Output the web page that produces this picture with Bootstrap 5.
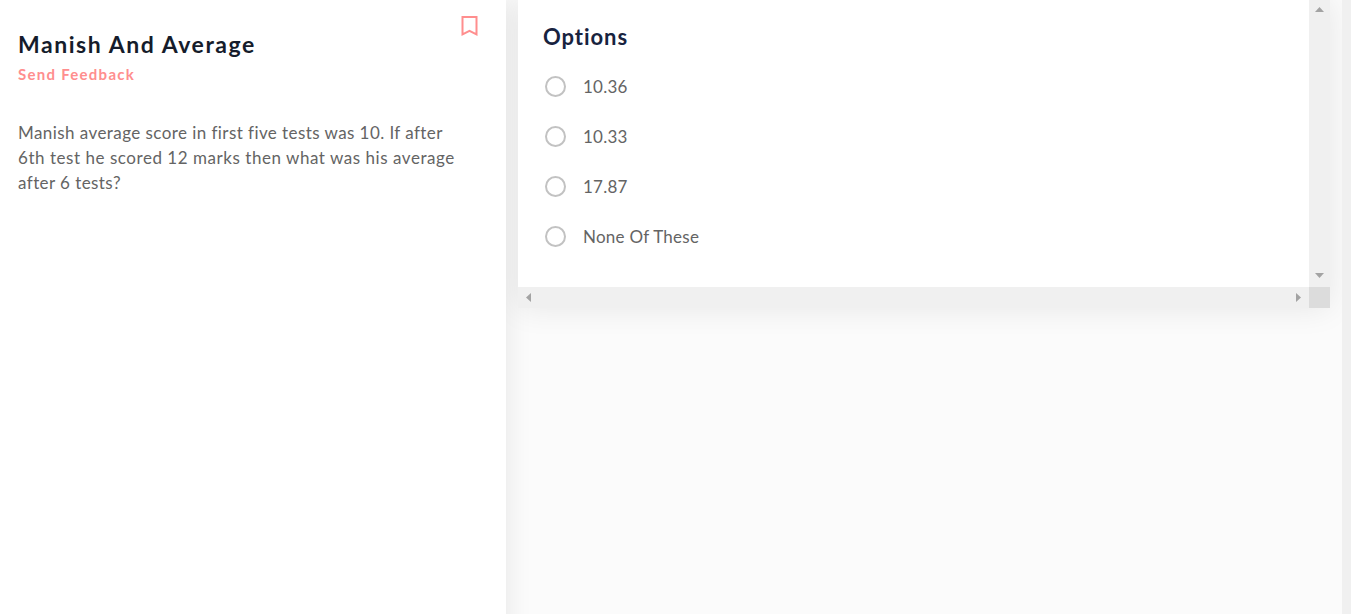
<!DOCTYPE html>
<html lang="en">
<head>
<meta charset="utf-8">
<meta name="viewport" content="width=device-width, initial-scale=1">
<title>Manish And Average</title>
<link href="https://cdn.jsdelivr.net/npm/bootstrap@5.3.0/dist/css/bootstrap.min.css" rel="stylesheet">
<style>
body{font-family:Muli,Lato,sans-serif;background:#fbfbfb;color:#646464}
.problem{width:506px;height:calc(100vh + 40px);padding:15px 28px 0 18px;box-shadow:0 0 26px rgba(0,0,0,.09)}
.problem h1{font-size:23px;line-height:30px;font-weight:700;letter-spacing:1.55px;color:#151c2b;margin:14px 0 0}
.feedback{font-size:15px;line-height:20px;font-weight:700;letter-spacing:1.27px;color:#ff8e8e;margin-top:5px}
.statement{font-size:17px;line-height:25px;letter-spacing:.43px;margin-top:36px}
.statement .wide{letter-spacing:.54px}
.workspace{padding-left:12px;z-index:1}
.quiz{width:812px;height:308px;display:grid;grid-template:287px 21px/791px 21px;box-shadow:0 0 30px rgba(0,0,0,.085)}
.options{padding:22px 25px 0}
.options h2{font-size:22px;line-height:30px;font-weight:700;letter-spacing:.95px;color:#18233f;margin:0 0 10px}
.choice{height:50px;font-size:17px;letter-spacing:.25px;gap:17px;padding-left:2px}
.choice .form-check-input{width:21px;height:21px;border:2px solid #c2c2c2;margin:0 0 2px}
.track{background:#f0f0f0}
.track svg{display:block;fill:#a3a3a3}
.track-y{padding:7px 0 9px}
.bookmark{margin-top:.5px}
.corner{background:#dcdcdc}
.edge{width:9px;background:#f0f0f0}
</style>
</head>
<body>
<div class="d-flex vh-100 overflow-hidden">
<section class="problem bg-white flex-shrink-0 position-relative">
<div class="d-flex justify-content-between align-items-start">
<h1>Manish And Average</h1>
<svg class="bookmark" width="17" height="21" viewBox="0 0 17 21"><path d="M1.500 1.100h14v17.300l-7-3.500-7 3.500z" fill="none" stroke="#ff8e8e" stroke-width="2"/></svg>
</div>
<a class="feedback d-block text-decoration-none" href="#">Send Feedback</a>
<p class="statement text-nowrap mb-0">Manish average score in first five tests was 10. If after<br><span class="wide">6th test he scored 12 marks then what was his average</span><br>after 6 tests?</p>
</section>
<main class="workspace flex-grow-1 position-relative overflow-hidden">
<div class="quiz">
<form class="options bg-white">
<h2>Options</h2>
<label class="choice d-flex align-items-center"><input class="form-check-input" type="radio" name="answer"><span>10.36</span></label>
<label class="choice d-flex align-items-center"><input class="form-check-input" type="radio" name="answer"><span>10.33</span></label>
<label class="choice d-flex align-items-center"><input class="form-check-input" type="radio" name="answer"><span>17.87</span></label>
<label class="choice d-flex align-items-center"><input class="form-check-input" type="radio" name="answer"><span>None Of These</span></label>
</form>
<div class="track track-y d-flex flex-column justify-content-between align-items-center">
<svg width="9" height="5" viewBox="0 0 9 5"><path d="M0 5 4.500 0 9 5z"/></svg>
<svg width="9" height="5" viewBox="0 0 9 5"><path d="M0 0h9L4.500 5z"/></svg>
</div>
<div class="track d-flex justify-content-between align-items-center px-2">
<svg width="5" height="9" viewBox="0 0 5 9"><path d="M5 0v9L0 4.500z"/></svg>
<svg width="5" height="9" viewBox="0 0 5 9"><path d="M0 0v9l5-4.500z"/></svg>
</div>
<div class="corner"></div>
</div>
</main>
<div class="edge flex-shrink-0"></div>
</div>
<script src="https://cdn.jsdelivr.net/npm/bootstrap@5.3.0/dist/js/bootstrap.bundle.min.js"></script>
</body>
</html>
